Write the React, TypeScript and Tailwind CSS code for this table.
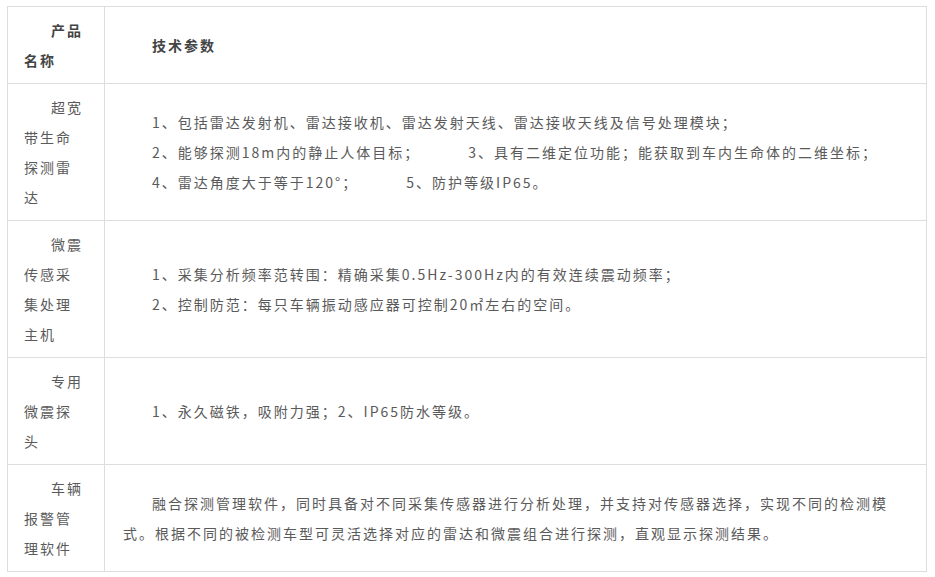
type Row = {
  name: string;
  params: React.ReactNode[];
};

const Gap = ({ w }: { w: string }) => <span className={`inline-block ${w}`} />;

const rows: Row[] = [
  {
    name: "超宽带生命探测雷达",
    params: [
      "1、包括雷达发射机、雷达接收机、雷达发射天线、雷达接收天线及信号处理模块；",
      <>
        2、能够探测18m内的静止人体目标；
        <Gap w="w-[48px]" />
        3、具有二维定位功能；能获取到车内生命体的二维坐标；
      </>,
      <>
        4、雷达角度大于等于120°；
        <Gap w="w-[48px]" />
        5、防护等级IP65。
      </>,
    ],
  },
  {
    name: "微震传感采集处理主机",
    params: [
      "1、采集分析频率范转围：精确采集0.5Hz-300Hz内的有效连续震动频率；",
      "2、控制防范：每只车辆振动感应器可控制20㎡左右的空间。",
    ],
  },
  {
    name: "专用微震探头",
    params: ["1、永久磁铁，吸附力强；2、IP65防水等级。"],
  },
  {
    name: "车辆报警管理软件",
    params: [
      "融合探测管理软件，同时具备对不同采集传感器进行分析处理，并支持对传感器选择，实现不同的检测模式。根据不同的被检测车型可灵活选择对应的雷达和微震组合进行探测，直观显示探测结果。",
    ],
  },
];

export default function App() {
  return (
    <div
      className="bg-white w-[935px] h-[577px] pl-[7px] pt-[6px] text-[14px] leading-[30px] tracking-[2px] text-[#5a5a5a]"
      style={{ fontFamily: '"Noto Sans CJK SC", "Noto Sans", sans-serif' }}
    >
      <table className="w-[920px] table-fixed border-collapse">
        <colgroup>
          <col className="w-[97px]" />
          <col />
        </colgroup>
        <thead>
          <tr>
            <th className="border border-[#ddd] pl-[16px] pr-[18px] py-2 text-left align-middle font-bold text-[#444] indent-[27px]">
              产品名称
            </th>
            <th className="border border-[#ddd] pl-[18px] pr-[37px] py-2 text-left align-middle font-bold text-[#444] indent-[29px]">
              技术参数
            </th>
          </tr>
        </thead>
        <tbody>
          {rows.map((r) => (
            <tr key={r.name}>
              <td className="border border-[#ddd] pl-[16px] pr-[18px] py-2 align-middle indent-[27px]">
                {r.name}
              </td>
              <td className="border border-[#ddd] pl-[18px] pr-[37px] py-2 align-middle">
                {r.params.map((p, i) => (
                  <p key={i} className="indent-[29px]">
                    {p}
                  </p>
                ))}
              </td>
            </tr>
          ))}
        </tbody>
      </table>
    </div>
  );
}
